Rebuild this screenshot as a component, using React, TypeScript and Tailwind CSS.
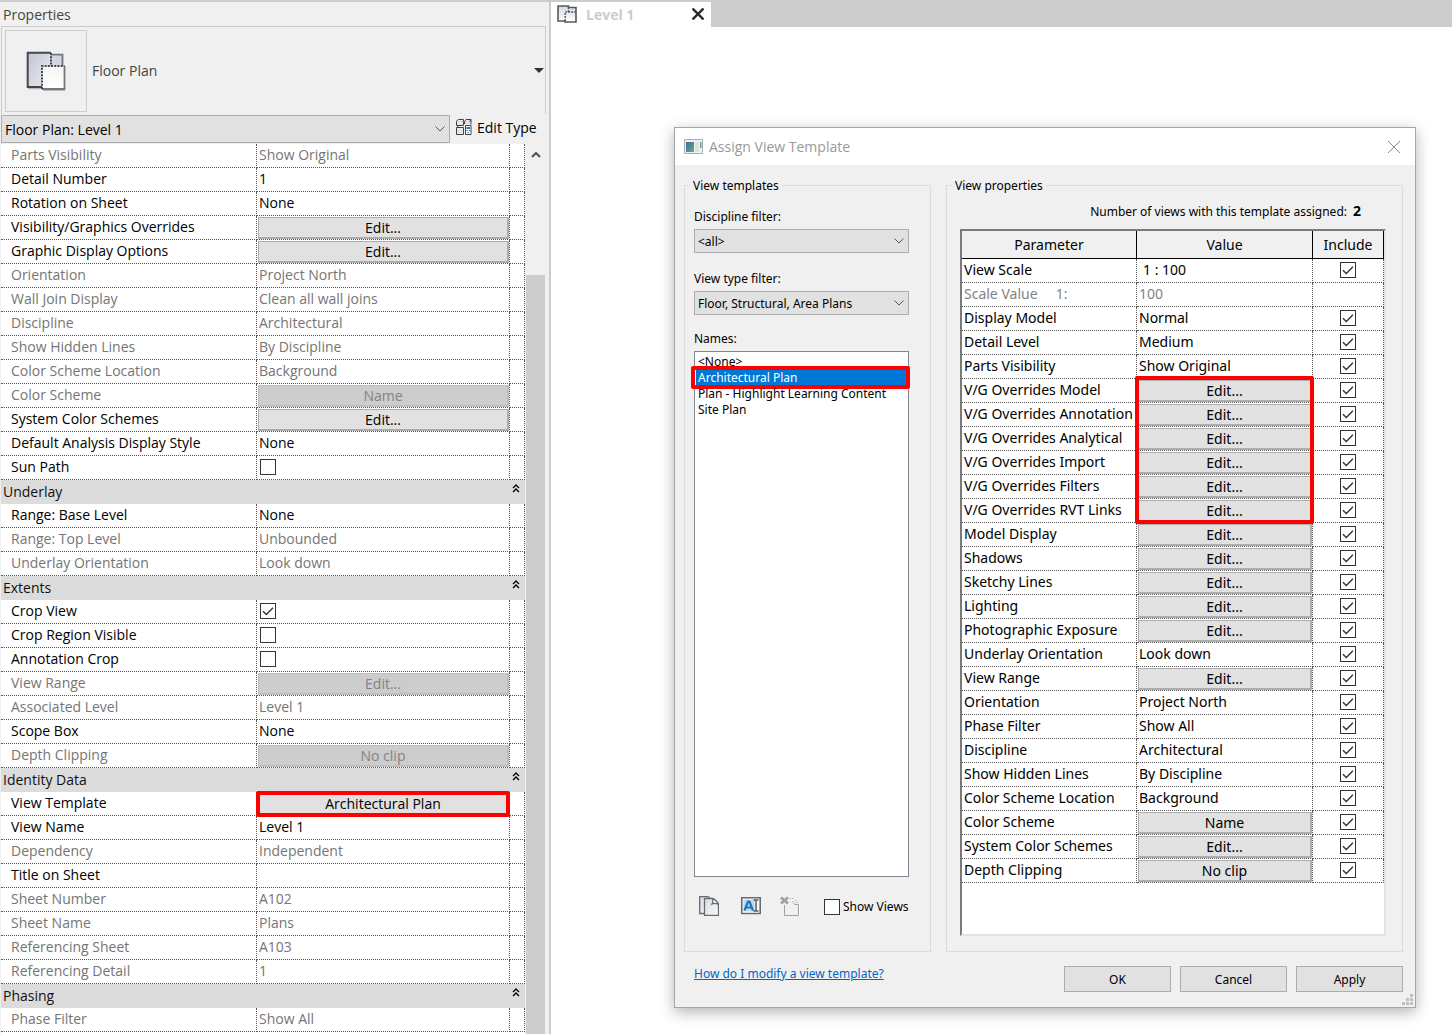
import React, { useState } from "react";
import clsx from "clsx";

type Row = {
  name: string;
  value?: string;
  type?: "text" | "button" | "check" | "scale";
  checked?: boolean;
  disabled?: boolean;
  noInclude?: boolean;
  mark?: "single" | "group";
};

type Section = { title?: string; rows: Row[] };

const sections: Section[] = [
  {
    rows: [
      { name: "Parts Visibility", value: "Show Original", disabled: true },
      { name: "Detail Number", value: "1" },
      { name: "Rotation on Sheet", value: "None" },
      { name: "Visibility/Graphics Overrides", value: "Edit...", type: "button" },
      { name: "Graphic Display Options", value: "Edit...", type: "button" },
      { name: "Orientation", value: "Project North", disabled: true },
      { name: "Wall Join Display", value: "Clean all wall joins", disabled: true },
      { name: "Discipline", value: "Architectural", disabled: true },
      { name: "Show Hidden Lines", value: "By Discipline", disabled: true },
      { name: "Color Scheme Location", value: "Background", disabled: true },
      { name: "Color Scheme", value: "Name", type: "button", disabled: true },
      { name: "System Color Schemes", value: "Edit...", type: "button" },
      { name: "Default Analysis Display Style", value: "None" },
      { name: "Sun Path", type: "check" },
    ],
  },
  {
    title: "Underlay",
    rows: [
      { name: "Range: Base Level", value: "None" },
      { name: "Range: Top Level", value: "Unbounded", disabled: true },
      { name: "Underlay Orientation", value: "Look down", disabled: true },
    ],
  },
  {
    title: "Extents",
    rows: [
      { name: "Crop View", type: "check", checked: true },
      { name: "Crop Region Visible", type: "check" },
      { name: "Annotation Crop", type: "check" },
      { name: "View Range", value: "Edit...", type: "button", disabled: true },
      { name: "Associated Level", value: "Level 1", disabled: true },
      { name: "Scope Box", value: "None" },
      { name: "Depth Clipping", value: "No clip", type: "button", disabled: true },
    ],
  },
  {
    title: "Identity Data",
    rows: [
      { name: "View Template", value: "Architectural Plan", type: "button", mark: "single" },
      { name: "View Name", value: "Level 1" },
      { name: "Dependency", value: "Independent", disabled: true },
      { name: "Title on Sheet", value: "" },
      { name: "Sheet Number", value: "A102", disabled: true },
      { name: "Sheet Name", value: "Plans", disabled: true },
      { name: "Referencing Sheet", value: "A103", disabled: true },
      { name: "Referencing Detail", value: "1", disabled: true },
    ],
  },
  {
    title: "Phasing",
    rows: [{ name: "Phase Filter", value: "Show All", disabled: true }],
  },
];

const templateRows: Row[] = [
  { name: "View Scale", value: "1 : 100", type: "scale" },
  { name: "Scale Value     1:", value: "100", disabled: true, noInclude: true },
  { name: "Display Model", value: "Normal" },
  { name: "Detail Level", value: "Medium" },
  { name: "Parts Visibility", value: "Show Original" },
  { name: "V/G Overrides Model", value: "Edit...", type: "button", mark: "group" },
  { name: "V/G Overrides Annotation", value: "Edit...", type: "button" },
  { name: "V/G Overrides Analytical", value: "Edit...", type: "button" },
  { name: "V/G Overrides Import", value: "Edit...", type: "button" },
  { name: "V/G Overrides Filters", value: "Edit...", type: "button" },
  { name: "V/G Overrides RVT Links", value: "Edit...", type: "button" },
  { name: "Model Display", value: "Edit...", type: "button" },
  { name: "Shadows", value: "Edit...", type: "button" },
  { name: "Sketchy Lines", value: "Edit...", type: "button" },
  { name: "Lighting", value: "Edit...", type: "button" },
  { name: "Photographic Exposure", value: "Edit...", type: "button" },
  { name: "Underlay Orientation", value: "Look down" },
  { name: "View Range", value: "Edit...", type: "button" },
  { name: "Orientation", value: "Project North" },
  { name: "Phase Filter", value: "Show All" },
  { name: "Discipline", value: "Architectural" },
  { name: "Show Hidden Lines", value: "By Discipline" },
  { name: "Color Scheme Location", value: "Background" },
  { name: "Color Scheme", value: "Name", type: "button" },
  { name: "System Color Schemes", value: "Edit...", type: "button" },
  { name: "Depth Clipping", value: "No clip", type: "button" },
];

const names = ["<None>", "Architectural Plan", "Plan - Highlight Learning Content", "Site Plan"];

function Checkbox({ id, checked }: { id: string; checked?: boolean }) {
  return (
    <span className="inline-grid size-4 align-top">
      <input
        id={id}
        type="checkbox"
        defaultChecked={checked}
        className="peer col-start-1 row-start-1 size-4 appearance-none border border-[#333] bg-white"
      />
      <svg
        viewBox="0 0 16 16"
        className="pointer-events-none invisible col-start-1 row-start-1 size-4 peer-checked:visible"
        fill="none"
        stroke="#333"
        strokeWidth="1.4"
      >
        <path d="M3 8.2 6.3 11.4 13 4.8" />
      </svg>
    </span>
  );
}

function Chevron() {
  return (
    <svg viewBox="0 0 10 6" className="pointer-events-none absolute top-1/2 right-[5px] h-[6px] w-[10px] -translate-y-1/2" fill="none" stroke="#555">
      <path d="M.5.5 5 5 9.5.5" />
    </svg>
  );
}

function GridButton({ children, disabled }: { children: React.ReactNode; disabled?: boolean }) {
  return (
    <button
      disabled={disabled}
      className={clsx(
        "block h-[22px] w-full border border-r-2 border-b-2 text-center leading-[19px]",
        disabled ? "border-[#bfbfbf] bg-[#ccc] text-[#838383]" : "border-[#adadad] bg-[#e1e1e1] text-black"
      )}
    >
      {children}
    </button>
  );
}

function PlanIcon({ className }: { className: string }) {
  return (
    <svg viewBox="0 0 40 40" className={className}>
      <defs>
        <linearGradient id="planBack" x1="0" y1="0" x2="1" y2="1">
          <stop offset="0" stopColor="#c3c6d0" />
          <stop offset="1" stopColor="#eceef1" />
        </linearGradient>
        <linearGradient id="planFront" x1="0" y1="0" x2="0" y2="1">
          <stop offset="0" stopColor="#f5f5f6" />
          <stop offset="1" stopColor="#fff" />
        </linearGradient>
      </defs>
      <path d="M2 37.5h14M17 39.3h22" stroke="#b9b9b9" strokeWidth="1.5" />
      <path d="M25 3.5h11v12H25z" fill="#d3d6de" />
      <path d="M1.7 1.7H25V15H16v21H1.700z" fill="url(#planBack)" />
      <path d="M16 15h23v23H16z" fill="url(#planFront)" />
      <path d="M25 1.7H1.7V36H16" fill="none" stroke="#43484f" strokeWidth="2" />
      <path d="M25 3.7h11.500V15M38.500 15v23H16" fill="none" stroke="#737880" strokeWidth="1.800" />
      <path d="M16 38V15h22.500M25 2v13" fill="none" stroke="#42464c" strokeWidth="2" strokeDasharray="2 1.200" />
    </svg>
  );
}

function EditTypeIcon() {
  return (
    <svg viewBox="0 0 16 16" className="size-4" fill="none" stroke="#3b4250">
      <path d="M1.500 2.500h4v3h-4zM9.500 2.500h4v2h-4zM1.500 10.500h4v3h-4z" stroke="#d5dae1" />
      <path d="M.5 6.500v-4l1-1.500 1-.5h5v1.500l-1 .5M7.500 2.500v4h-7M8.500 5V2.500l1.500-2h5v5M13.500 2.500l1.500-2" />
      <path d="M.5 8.500v7h7v-7zM1.500 8.500l.5-2" />
      <path d="M9.500 6.500h5.500v9h-5.500z" fill="#fff" />
      <path d="M10.500 9h3.500" stroke="#2b77bd" strokeWidth="2" />
      <path d="M10.500 11.500h1M13 11.500h1M11.700 13.500h1" />
    </svg>
  );
}

function Properties() {
  return (
    <aside className="flex w-[551px] shrink-0 flex-col border-r-2 border-[#ccc] bg-[#f0f0f0] pl-px text-[14px]">
      <h1 className="h-6 pl-0.5 leading-[26px] text-[#444]">Properties</h1>
      <div className="mr-[3px] flex h-[88px] items-center border border-b-0 border-[#ccc] pr-px pl-[3px]">
        <div className="grid size-[82px] shrink-0 place-items-center border border-[#ccc]">
          <PlanIcon className="size-10" />
        </div>
        <span className="flex-1 pl-[5px] text-[#444]">Floor Plan</span>
        <button aria-label="Change type" className="h-full">
          <svg viewBox="0 0 12 6" className="h-[5px] w-[10px]" fill="#333">
            <path d="M0 0h12L6 6z" />
          </svg>
        </button>
      </div>
      <div className="mt-px flex h-[29px] pr-1">
        <div className="relative h-7 w-[449px]">
          <select aria-label="Instance filter" className="h-7 w-full appearance-none border border-[#adadad] bg-[#e1e1e1] pl-[3px] text-black">
            <option>Floor Plan: Level 1</option>
          </select>
          <Chevron />
        </div>
        <button className="flex h-6 items-center gap-[5px] pl-1.5 text-black">
          <EditTypeIcon />
          Edit Type
        </button>
      </div>
      <div className="flex flex-1">
        <div className="w-[524px] bg-white">
          <table className="w-full table-fixed border-separate border-spacing-0">
            <colgroup>
              <col className="w-[256px]" />
              <col />
              <col className="w-[15px]" />
            </colgroup>
            {sections.map((section, key) => (
              <tbody key={key}>
                {section.title && (
                  <tr className="h-6 bg-[#dcdcdc]">
                    <th colSpan={3} scope="colgroup" className="p-0 text-left font-normal">
                      <div className="flex h-6 justify-between pr-[5px] pl-0.5 leading-6 text-[#111]">
                        {section.title}
                        <button aria-label={`Collapse ${section.title}`} className="flex h-4 items-center">
                          <svg viewBox="0 0 8 9" className="h-[9px] w-2" fill="none" stroke="#000" strokeWidth="1.400">
                            <path d="M1 4 4 1l3 3M1 8l3-3 3 3" />
                          </svg>
                        </button>
                      </div>
                    </th>
                  </tr>
                )}
                {section.rows.map((row) => (
                  <tr key={row.name} className={clsx("h-6 align-top", row.disabled ? "text-[#757575]" : "text-black")}>
                    <td className="h-6 border-r border-b border-dotted border-[#555] p-0 pl-2.5 leading-[22px]">
                      {row.type === "check" ? <label htmlFor={`prop-${row.name}`}>{row.name}</label> : row.name}
                    </td>
                    <td className="relative h-6 border-r border-b border-dotted border-[#555] p-0 leading-[22px]">
                      {row.type === "button" ? (
                        <div className="pt-px pl-px">
                          <GridButton disabled={row.disabled}>{row.value}</GridButton>
                        </div>
                      ) : row.type === "check" ? (
                        <div className="flex pt-[3px] pl-[3px]">
                          <Checkbox id={`prop-${row.name}`} checked={row.checked} />
                        </div>
                      ) : (
                        <span className="pl-0.5">{row.value}</span>
                      )}
                      {row.mark === "single" && (
                        <span className="pointer-events-none absolute -top-px -right-px -left-px z-10 h-[26px] rounded-[2px] border-4 border-[#f00]" />
                      )}
                    </td>
                    <td className="border-r border-b border-dotted border-[#555] p-0" />
                  </tr>
                ))}
              </tbody>
            ))}
          </table>
        </div>
        <div className="ml-px flex w-[19px] flex-col">
          <button aria-label="Scroll up" className="grid h-5 place-items-center">
            <svg viewBox="0 0 10 7" className="h-[7px] w-[10px]" fill="none" stroke="#505050" strokeWidth="2">
              <path d="M1 6l4-4 4 4" />
            </svg>
          </button>
          <div className="mt-[111px] flex-1 bg-[#cdcdcd]" />
        </div>
      </div>
    </aside>
  );
}

function FilterSelect({ id, label, option }: { id: string; label: string; option: string }) {
  return (
    <div className="flex flex-col gap-1">
      <label htmlFor={id} className="h-4 leading-4">
        {label}
      </label>
      <div className="relative">
        <select id={id} className="block h-6 w-full appearance-none border border-[#adadad] bg-[#e1e1e1] pt-px pl-[3px]">
          <option>{option}</option>
        </select>
        <Chevron />
      </div>
    </div>
  );
}

function ViewTemplates() {
  const [selected, setSelected] = useState("Architectural Plan");

  return (
    <fieldset className="w-[247px] shrink-0 border border-[#dcdcdc]">
      <legend className="ml-[5px] px-[3px] leading-[17px]">View templates</legend>
      <div className="flex flex-col pt-[15px] pr-[21px] pb-[35px] pl-[9px]">
        <FilterSelect id="discipline" label="Discipline filter:" option="<all>" />
        <div className="h-[18px]" />
        <FilterSelect id="view-type" label="View type filter:" option="Floor, Structural, Area Plans" />
        <span id="names-label" className="mt-4 mb-1 h-4 leading-4">
          Names:
        </span>
        <ul role="listbox" aria-labelledby="names-label" className="h-[526px] border border-[#828790] bg-white pt-0.5">
          {names.map((name) => (
            <li
              key={name}
              role="option"
              aria-selected={name === selected}
              onClick={() => setSelected(name)}
              className={clsx("relative mr-0.5 ml-px h-4 pl-0.5 leading-4", name === selected && "bg-[#0078d7] text-white")}
            >
              {name}
              {name === "Architectural Plan" && (
                <span className="pointer-events-none absolute -top-1 -right-1 -bottom-[3px] -left-[5px] rounded-[2px] border-4 border-[#f00]" />
              )}
            </li>
          ))}
        </ul>
        <div className="mt-[19px] flex h-5 items-center pl-[5px]">
          <button aria-label="Duplicate">
            <svg viewBox="0 0 20 20" className="size-5" fill="none" stroke="#666b73" strokeWidth="1.3">
              <defs>
                <linearGradient id="sheet" x1="0" y1="0" x2="1" y2="1">
                  <stop offset="0" stopColor="#d9dbe2" />
                  <stop offset="1" stopColor="#fafafb" />
                </linearGradient>
              </defs>
              <path d="M5.500 17.500H.7V.7H9q1 .3 2 1.800" fill="url(#sheet)" />
              <path d="M5.500 2.500h8q2.500.5 6 5.500v11.300h-14z" fill="url(#sheet)" />
              <path d="M13.500 2.500q1 3-.5 5.500 3-1.500 6.500.5-2-4.500-6-6z" fill="#fff" />
            </svg>
          </button>
          <button aria-label="Rename" className="ml-[22px]">
            <svg viewBox="0 0 20 20" className="size-5" fill="none">
              <path d="M.8 1.800h18.400v15.700H.8z" fill="#fff" stroke="#666b73" strokeWidth="1.600" />
              <path d="M2.500 3.500h11v12h-11z" fill="#b5dcf5" />
              <path d="m3.500 14.500 3.500-9h1.500l3.500 9M5 11.500h6" stroke="#2475b8" strokeWidth="2.200" />
              <path d="M12.500 4h5M12.500 15h5M15 4v11" stroke="#555a60" strokeWidth="1.500" />
            </svg>
          </button>
          <button aria-label="Delete" className="ml-[19px]">
            <svg viewBox="0 0 20 20" className="size-5" fill="none" stroke="#a0a0a0">
              <path d="M5 20.500h14.500V9" stroke="#fff" />
              <path d="M4.500 9v10.500h14V8.500h-4M13.500 7.500h1M16.500 6.500h1" />
              <path d="M12.500 2.500h1M15.500 4.500h1M10 2.500h1M12.500 5.500h1" />
              <path d="M1 1.500 8 7.500M8 1.500 1 7.500" strokeWidth="2.800" />
            </svg>
          </button>
          <div className="ml-6 flex items-center gap-[3px] pt-0.5 whitespace-nowrap">
            <Checkbox id="show-views" />
            <label htmlFor="show-views">Show Views</label>
          </div>
        </div>
      </div>
    </fieldset>
  );
}

function ViewProperties() {
  return (
    <fieldset className="min-w-0 flex-1 border border-[#dcdcdc]">
      <legend className="ml-[5px] px-[3px] leading-[17px]">View properties</legend>
      <div className="pt-[9px] pr-4 pl-[13px]">
        <p className="mb-[9px] pr-[25px] text-right leading-4">
          Number of views with this template assigned:
          <b className="pl-1.5 text-[14px]">2</b>
        </p>
        <div className="min-h-[707px] border-2 border-t-[#7a7a7a] border-r-[#e3e3e3] border-b-[#e3e3e3] border-l-[#7a7a7a] bg-white text-[14px]">
          <table className="w-full table-fixed border-separate border-spacing-0">
            <colgroup>
              <col className="w-[175px]" />
              <col />
              <col className="w-[71px]" />
            </colgroup>
            <thead>
              <tr className="h-7 bg-[#f0f0f0]">
                {["Parameter", "Value", "Include"].map((title) => (
                  <th key={title} scope="col" className="border-r border-b border-black p-0 font-normal">
                    {title}
                  </th>
                ))}
              </tr>
            </thead>
            <tbody>
              {templateRows.map((row) => (
                <tr key={row.name} className={clsx("h-6 align-top", row.disabled ? "text-[#838383]" : "text-black")}>
                  <td className="h-6 border-r border-b border-dotted border-[#555] p-0 pl-0.5 leading-[22px] whitespace-pre">
                    {row.noInclude ? row.name : <label htmlFor={`include-${row.name}`}>{row.name}</label>}
                  </td>
                  <td className="relative h-6 border-r border-b border-dotted border-[#555] p-0 leading-[22px]">
                    {row.type === "button" ? (
                      <div className="pt-px pl-px">
                        <GridButton>{row.value}</GridButton>
                      </div>
                    ) : (
                      <span className={row.type === "scale" ? "pl-1.5" : "pl-0.5"}>{row.value}</span>
                    )}
                    {row.mark === "group" && (
                      <span className="pointer-events-none absolute -top-[3px] -right-0.5 -left-0.5 z-10 h-[148px] rounded-[2px] border-4 border-[#f00]" />
                    )}
                  </td>
                  <td className="h-6 border-r border-b border-dotted border-[#555] p-0">
                    <div className="flex justify-center pt-[3px]">
                      {!row.noInclude && <Checkbox id={`include-${row.name}`} checked />}
                    </div>
                  </td>
                </tr>
              ))}
            </tbody>
          </table>
        </div>
      </div>
    </fieldset>
  );
}

function TemplateDialog() {
  return (
    <section
      role="dialog"
      aria-labelledby="dialog-title"
      className="relative mt-[100px] mr-9 mb-[26px] ml-[123px] border border-[#a5a5a5] bg-[#f0f0f0] font-['Noto_Sans',sans-serif] text-[12px] text-black shadow-[0_4px_14px_rgba(0,0,0,0.3)]"
    >
      <header className="flex h-[37px] items-center bg-white pr-[15px] pl-[9px]">
        <svg viewBox="0 0 19 15" className="h-[15px] w-[19px]">
          <defs>
            <linearGradient id="appIcon" x1="0" y1="0" x2="1" y2="1">
              <stop offset="0" stopColor="#3b6ea5" />
              <stop offset="1" stopColor="#5fae7b" />
            </linearGradient>
          </defs>
          <path d="M.5.5h18v14H.5z" fill="#f0f0f0" stroke="#a5acb3" />
          <path d="M2 3h8v10H2z" fill="url(#appIcon)" />
          <path d="M11 3h4v10h-4z" fill="#e0e0e0" />
          <path d="M16 3h1.500v6H16z" fill="#5fae8b" />
        </svg>
        <h2 id="dialog-title" className="flex-1 pl-1.5 font-['Open_Sans',sans-serif] text-[14px] text-[#999]">
          Assign View Template
        </h2>
        <button aria-label="Close dialog">
          <svg viewBox="0 0 12 12" className="size-3" stroke="#888">
            <path d="m0 0 12 12M12 0 0 12" />
          </svg>
        </button>
      </header>
      <div className="flex gap-[15px] pt-3 pr-3 pl-[9px]">
        <ViewTemplates />
        <ViewProperties />
      </div>
      <footer className="flex items-start justify-between pt-[14px] pr-3 pb-[15px] pl-[19px]">
        <a href="#help" className="leading-4 text-[#0066cc] underline">
          How do I modify a view template?
        </a>
        <div className="flex gap-[9px]">
          {["OK", "Cancel", "Apply"].map((label) => (
            <button key={label} className="h-[26px] w-[107px] border border-[#adadad] bg-[#e1e1e1] pt-0.5">
              {label}
            </button>
          ))}
        </div>
      </footer>
      <svg viewBox="0 0 11 11" className="absolute right-0.5 bottom-0.5 size-[11px]" fill="#bfbfbf">
        <path d="M8 0h3v3H8zM4 4h3v3H4zM8 4h3v3H8zM0 8h3v3H0zM4 8h3v3H4zM8 8h3v3H8z" />
      </svg>
    </section>
  );
}

function App() {
  return (
    <div className="flex min-h-screen border-t-2 border-[#ccc] bg-white font-['Open_Sans',sans-serif]">
      <Properties />
      <main className="min-w-0 flex-1">
        <div className="flex h-[25px] bg-[#ccc]">
          <div className="flex w-[160px] items-center bg-white pr-[7px] pb-px pl-1.5">
            <svg viewBox="0 0 20 18" className="h-[18px] w-5" fill="none" stroke="#555a61">
              <defs>
                <linearGradient id="tabPlan" x1="0" y1="0" x2="0" y2="1">
                  <stop offset="0" stopColor="#d5d8df" />
                  <stop offset="1" stopColor="#fff" />
                </linearGradient>
              </defs>
              <path d="M1 1h10.500v1.500H19V17H8v-1H1z" fill="url(#tabPlan)" strokeWidth="1.600" />
              <path d="M8.200 16V7H19M11.500 2v5" strokeWidth="1.400" strokeDasharray="2 1" />
            </svg>
            <span className="flex-1 pl-[9px] text-[14px] font-bold text-[#ccc]">Level 1</span>
            <button aria-label="Close tab">
              <svg viewBox="0 0 12 12" className="size-3" stroke="#2b2b2b" strokeWidth="2.400">
                <path d="m.5.5 11 11M11.500.5l-11 11" />
              </svg>
            </button>
          </div>
        </div>
        <TemplateDialog />
      </main>
    </div>
  );
}

export default App;
